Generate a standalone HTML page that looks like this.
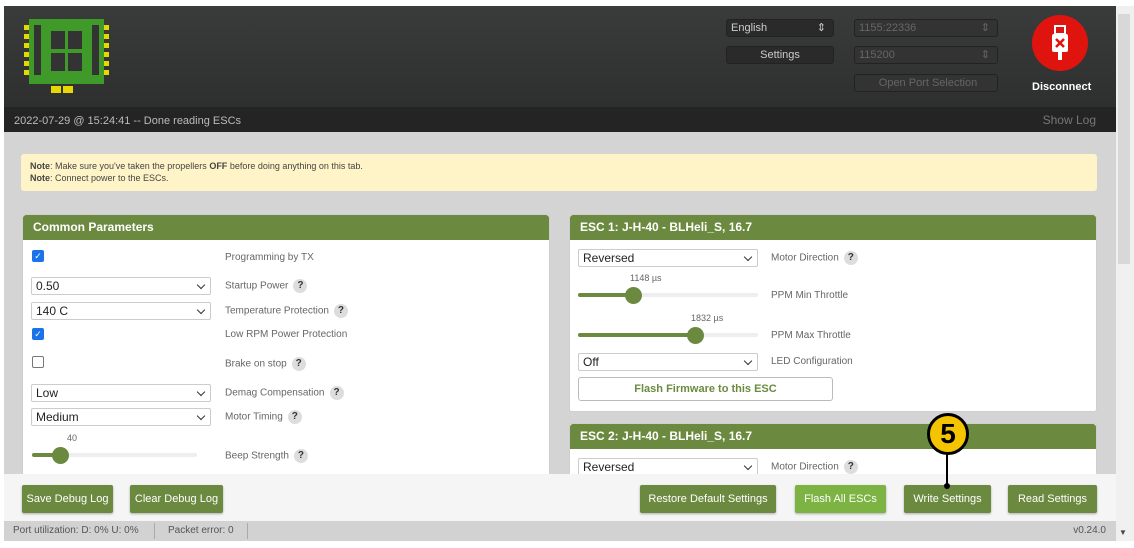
<!DOCTYPE html>
<html><head><style>
*{box-sizing:border-box;margin:0;padding:0}
body{width:1134px;height:548px;background:#fff;font-family:"Liberation Sans",sans-serif;position:relative;overflow:hidden;font-size:11px}
.a{position:absolute}
.hdr{left:4px;top:6px;width:1112px;height:101px;background:linear-gradient(#3a3b3b,#2e2f2f)}
.log{left:4px;top:107px;width:1112px;height:25px;background:#242424;color:#bbb;font-size:11px}
.cont{left:4px;top:132px;width:1112px;height:342px;background:#d4d4d4}
.note{left:21px;top:154px;width:1076px;height:37px;background:#fff4c8;border-radius:3px;font-size:9px;color:#444;padding:6px 9px;line-height:12px}
.panel{background:#fff;border:1px solid #cfcfcf;border-radius:3px}
.ph{background:#6b8a3f;color:#fff;font-weight:bold;font-size:12px;height:25px;line-height:24px;padding-left:10px;border-radius:3px 3px 0 0}
.sel{position:absolute;height:18px;border:1px solid #ccc;border-radius:2px;background:#fff;font-size:12px;padding-left:4px;line-height:16px;color:#222}
.sel:after{content:"";position:absolute;right:6px;top:4px;width:5px;height:5px;border-right:1.5px solid #333;border-bottom:1.5px solid #333;transform:rotate(45deg)}
.lbl{position:absolute;font-size:10px;color:#666}
.q{display:inline-block;width:14px;height:14px;border-radius:50%;background:#ddd;color:#333;font-weight:bold;text-align:center;line-height:14px;font-size:10px;margin-left:5px;vertical-align:middle}
.cb{position:absolute;width:12px;height:12px;border-radius:2px;background:#1a73e8;color:#fff;font-size:9px;line-height:12px;text-align:center}
.cbo{position:absolute;width:12px;height:12px;border-radius:2px;border:1px solid #777;background:#fff}
.trk{position:absolute;height:4px;background:#eee;border-radius:2px}
.fill{position:absolute;left:0;top:0;height:4px;background:#6b8a3f;border-radius:2px}
.knob{position:absolute;width:17px;height:17px;border-radius:50%;background:#6b8a3f;top:-6px}
.btn{position:absolute;top:485px;height:28px;background:#6b8a3f;color:#fff;font-size:11px;text-align:center;line-height:28px;border-radius:2px;box-shadow:0 1px 2px rgba(0,0,0,.3)}
.dsel{position:absolute;height:18px;border-radius:3px;background:#2a2a2a;border:1px solid #222;color:#ccc;font-size:11px;line-height:16px;padding-left:4px}
</style></head><body>
<div class="a hdr"></div>
<svg class="a" style="left:22px;top:17px" width="90" height="80" viewBox="0 0 90 80">
<rect x="7" y="2" width="75" height="65" fill="#3f9a2a"/>
<g fill="#e6d800"><rect x="2" y="8" width="5" height="5"/><rect x="2" y="17" width="5" height="5"/><rect x="2" y="26" width="5" height="5"/><rect x="2" y="35" width="5" height="5"/><rect x="2" y="44" width="5" height="5"/><rect x="2" y="53" width="5" height="5"/>
<rect x="82" y="8" width="5" height="5"/><rect x="82" y="17" width="5" height="5"/><rect x="82" y="26" width="5" height="5"/><rect x="82" y="35" width="5" height="5"/><rect x="82" y="44" width="5" height="5"/><rect x="82" y="53" width="5" height="5"/>
<rect x="29" y="69" width="10" height="7"/><rect x="41" y="69" width="10" height="7"/></g>
<g fill="#333"><rect x="46" y="14" width="14" height="18"/><rect x="29" y="14" width="14" height="18"/><rect x="29" y="36" width="14" height="18"/><rect x="46" y="36" width="14" height="18"/>
<rect x="12" y="8" width="7" height="50"/><rect x="70" y="8" width="7" height="50"/></g></svg>
<div class="dsel" style="left:726px;top:19px;width:108px">English<span style="position:absolute;right:7px">⇕</span></div>
<div class="dsel" style="left:726px;top:46px;width:108px;text-align:center;padding:0">Settings</div>
<div class="dsel" style="left:854px;top:19px;width:144px;color:#666;background:#333">1155:22336<span style="position:absolute;right:7px">⇕</span></div>
<div class="dsel" style="left:854px;top:46px;width:144px;color:#666;background:#333">115200<span style="position:absolute;right:7px">⇕</span></div>
<div class="dsel" style="left:854px;top:74px;width:144px;color:#666;background:#333;text-align:center">Open Port Selection</div>
<div class="a" style="left:1032px;top:15px;width:56px;height:56px;border-radius:50%;background:#e0140f"></div>
<svg class="a" style="left:1048px;top:24px" width="24" height="38" viewBox="0 0 24 38"><rect x="7" y="2" width="10" height="8" fill="none" stroke="#fff" stroke-width="2"/><rect x="4" y="10" width="16" height="18" rx="2" fill="#fff"/><path d="M8 15l8 8M16 15l-8 8" stroke="#e0140f" stroke-width="2.5"/><rect x="10" y="28" width="4" height="8" fill="#fff"/></svg>
<div class="a" style="left:1032px;top:81px;color:#fff;font-size:11px;font-weight:bold">Disconnect</div>
<div class="a log"><span style="position:absolute;left:10px;top:8px">2022-07-29 @ 15:24:41 -- Done reading ESCs</span><span style="position:absolute;right:20px;top:6px;color:#777;font-size:12px">Show Log</span></div>
<div class="a" style="left:1116px;top:6px;width:18px;height:535px;background:#f0f0f0"></div>
<div class="a" style="left:1118px;top:14px;width:12px;height:250px;background:#d8d8d8"></div>
<div class="a cont"></div>
<div class="a note"><b>Note</b>: Make sure you've taken the propellers <b>OFF</b> before doing anything on this tab.<br><b>Note</b>: Connect power to the ESCs.</div>

<div class="a panel" style="left:22px;top:214px;width:528px;height:270px"><div class="ph">Common Parameters</div></div>
<div class="cb" style="left:32px;top:250px">✓</div><div class="lbl" style="left:225px;top:252px">Programming by TX</div>
<div class="sel" style="left:31px;top:277px;width:180px">0.50</div><div class="lbl" style="left:225px;top:279px">Startup Power<span class="q">?</span></div>
<div class="sel" style="left:31px;top:302px;width:180px">140 C</div><div class="lbl" style="left:225px;top:304px">Temperature Protection<span class="q">?</span></div>
<div class="cb" style="left:32px;top:328px">✓</div><div class="lbl" style="left:225px;top:329px">Low RPM Power Protection</div>
<div class="cbo" style="left:32px;top:356px"></div><div class="lbl" style="left:225px;top:357px">Brake on stop<span class="q">?</span></div>
<div class="sel" style="left:31px;top:384px;width:180px">Low</div><div class="lbl" style="left:225px;top:386px">Demag Compensation<span class="q">?</span></div>
<div class="sel" style="left:31px;top:408px;width:180px">Medium</div><div class="lbl" style="left:225px;top:410px">Motor Timing<span class="q">?</span></div>
<div class="lbl" style="left:67px;top:433px;font-size:9px">40</div>
<div class="trk" style="left:32px;top:453px;width:165px"><div class="fill" style="width:28px"></div><div class="knob" style="left:20px"></div></div>
<div class="lbl" style="left:225px;top:449px">Beep Strength<span class="q">?</span></div>

<div class="a panel" style="left:569px;top:214px;width:528px;height:198px"><div class="ph">ESC 1: J-H-40 - BLHeli_S, 16.7</div></div>
<div class="sel" style="left:578px;top:249px;width:180px">Reversed</div><div class="lbl" style="left:771px;top:251px">Motor Direction<span class="q">?</span></div>
<div class="lbl" style="left:630px;top:273px;font-size:9px">1148 µs</div>
<div class="trk" style="left:578px;top:293px;width:180px"><div class="fill" style="width:55px"></div><div class="knob" style="left:47px"></div></div>
<div class="lbl" style="left:771px;top:290px">PPM Min Throttle</div>
<div class="lbl" style="left:691px;top:313px;font-size:9px">1832 µs</div>
<div class="trk" style="left:578px;top:333px;width:180px"><div class="fill" style="width:118px"></div><div class="knob" style="left:109px"></div></div>
<div class="lbl" style="left:771px;top:330px">PPM Max Throttle</div>
<div class="sel" style="left:578px;top:353px;width:180px">Off</div><div class="lbl" style="left:771px;top:356px">LED Configuration</div>
<div class="a" style="left:578px;top:377px;width:255px;height:24px;border:1px solid #bbb;border-radius:3px;background:#fff;color:#6b8a3f;font-weight:bold;text-align:center;line-height:22px;font-size:11px">Flash Firmware to this ESC</div>
<div class="a panel" style="left:569px;top:423px;width:528px;height:60px"><div class="ph">ESC 2: J-H-40 - BLHeli_S, 16.7</div></div>
<div class="sel" style="left:578px;top:458px;width:180px">Reversed</div><div class="lbl" style="left:771px;top:460px">Motor Direction<span class="q">?</span></div>

<div class="a" style="left:4px;top:474px;width:1112px;height:47px;background:#f5f5f5"></div>
<div class="btn" style="left:22px;width:91px">Save Debug Log</div>
<div class="btn" style="left:130px;width:93px">Clear Debug Log</div>
<div class="btn" style="left:640px;width:136px">Restore Default Settings</div>
<div class="btn" style="left:795px;width:91px;background:#7cb342">Flash All ESCs</div>
<div class="btn" style="left:904px;width:87px">Write Settings</div>
<div class="btn" style="left:1008px;width:89px">Read Settings</div>
<div class="a" style="left:946px;top:440px;width:2px;height:45px;background:#000"></div>
<div class="a" style="left:944px;top:483px;width:6px;height:6px;border-radius:50%;background:#000"></div>
<div class="a" style="left:927px;top:413px;width:42px;height:42px;border-radius:50%;background:#f5c400;border:3px solid #000;text-align:center;line-height:36px;font-size:28px;font-weight:bold;color:#000">5</div>

<div class="a" style="left:4px;top:521px;width:1112px;height:20px;background:#d2d2d2;color:#555;font-size:10px;line-height:20px">
<span style="position:absolute;left:9px">Port utilization: D: 0% U: 0%</span>
<span style="position:absolute;left:150px;top:2px;width:1px;height:16px;background:#aaa"></span>
<span style="position:absolute;left:164px">Packet error: 0</span>
<span style="position:absolute;left:243px;top:2px;width:1px;height:16px;background:#aaa"></span>
<span style="position:absolute;right:10px">v0.24.0</span></div>
<div class="a" style="left:1119px;top:528px;font-size:8px;color:#444">▼</div>
</body></html>
